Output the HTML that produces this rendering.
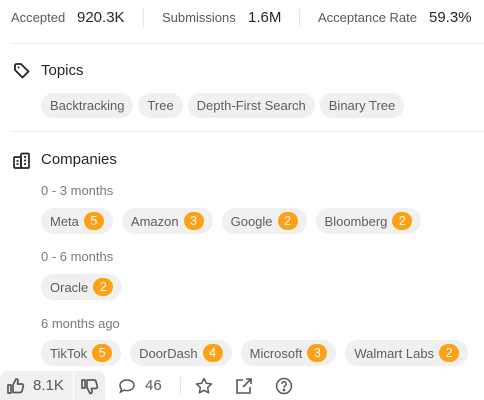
<!DOCTYPE html><html><head><style>
*{margin:0;padding:0;box-sizing:border-box}
body{width:484px;height:400px;background:#fff;font-family:"Liberation Sans",sans-serif;position:relative;overflow:hidden;color:#262626}
.a{position:absolute;white-space:nowrap}
.l{font-size:13px;color:#595959}
.v{font-size:15px;color:#262626}
.vd{position:absolute;width:1px;height:18px;background:#e5e5e5}
.hr{position:absolute;left:11px;right:0;height:1px;background:#ebebeb}
.h{font-size:15px;color:#262626}
.sub{font-size:13px;color:#7a7a7a}
.row{position:absolute;left:41px;display:flex;gap:7px}
.chip{height:26px;border-radius:13px;background:#f0f0f0;color:#5e5e5e;font-size:13px;padding:0 9px;display:flex;align-items:center;gap:4px}
.c .chip{padding:0 9px;gap:5px}
.b{background:#ffa116;color:#fff;border-radius:10px;min-width:20px;height:18px;font-size:12.5px;display:flex;align-items:center;justify-content:center}
svg{position:absolute}
</style></head><body>
<div class="a l" style="left:11px;top:10px">Accepted</div>
<div class="a v" style="left:77px;top:9px">920.3K</div>
<div class="vd" style="left:143px;top:9px"></div>
<div class="a l" style="left:162px;top:10px">Submissions</div>
<div class="a v" style="left:248px;top:9px">1.6M</div>
<div class="vd" style="left:299px;top:9px"></div>
<div class="a l" style="left:318px;top:10px">Acceptance Rate</div>
<div class="a v" style="left:429px;top:9px">59.3%</div>
<div class="hr" style="top:43px"></div>

<svg style="left:13px;top:62px" width="18" height="18" viewBox="0 0 18 18"><path d="M2 3v5l7.5 7.5 6-6L8 2H3z" fill="none" stroke="#262626" stroke-width="1.8" stroke-linejoin="round"/><circle cx="5.5" cy="5.5" r="1" fill="#262626"/></svg>
<div class="a h" style="left:41px;top:62px">Topics</div>
<div class="row" style="top:93px;gap:5px"><div class="chip" style="height:25px">Backtracking</div><div class="chip" style="height:25px">Tree</div><div class="chip" style="height:25px">Depth-First Search</div><div class="chip" style="height:25px">Binary Tree</div></div>
<div class="hr" style="top:131px"></div>

<svg style="left:13px;top:152px" width="18" height="18" viewBox="0 0 18 18"><rect x="1" y="5" width="7" height="11" rx="1" fill="none" stroke="#262626" stroke-width="1.7"/><rect x="8" y="1.5" width="8" height="14.5" rx="1" fill="none" stroke="#262626" stroke-width="1.7"/><path d="M3.5 9h2M3.5 12h2M11 5h2M11 8.5h2M11 12h2" stroke="#262626" stroke-width="1.7"/></svg>
<div class="a h" style="left:41px;top:151px">Companies</div>
<div class="a sub" style="left:41px;top:183px">0 - 3 months</div>
<div class="row c" style="top:208px;gap:9px"><div class="chip">Meta<span class="b">5</span></div><div class="chip">Amazon<span class="b">3</span></div><div class="chip">Google<span class="b">2</span></div><div class="chip">Bloomberg<span class="b">2</span></div></div>
<div class="a sub" style="left:41px;top:249px">0 - 6 months</div>
<div class="row c" style="top:274px"><div class="chip">Oracle<span class="b">2</span></div></div>
<div class="a sub" style="left:41px;top:316px">6 months ago</div>
<div class="row c" style="top:340px;gap:9px"><div class="chip">TikTok<span class="b">5</span></div><div class="chip">DoorDash<span class="b">4</span></div><div class="chip">Microsoft<span class="b">3</span></div><div class="chip">Walmart Labs<span class="b">2</span></div></div>

<div class="a" style="left:0;top:371px;width:73px;height:29px;background:#f0f0f0;border-top-left-radius:8px"></div>
<div class="a" style="left:74px;top:371px;width:31px;height:29px;background:#f0f0f0;border-top-right-radius:8px"></div>
<svg style="left:7px;top:377px" width="18" height="18" viewBox="0 0 18 18" fill="none" stroke="#595959" stroke-width="1.7" stroke-linejoin="round"><path d="M1 8h3v8H1zM6 8l3-6c1.5 0 2 1 2 2l-.5 3H15c1 0 1.5 1 1.3 2l-1.3 5c-.3 1-1 1.5-2 1.5H6z"/></svg>
<div class="a" style="left:33px;top:377px;font-size:15px;color:#595959">8.1K</div>
<svg style="left:81px;top:378px" width="18" height="18" viewBox="0 0 18 18" fill="none" stroke="#595959" stroke-width="1.7" stroke-linejoin="round"><path d="M1 2h3v8H1zM6 2h7c1 0 1.7.5 2 1.5l1.3 5c.2 1-.3 2-1.3 2h-4.5l.5 3c0 1-.5 2-2 2l-3-6z"/></svg>
<svg style="left:118px;top:378px" width="18" height="16" viewBox="0 0 18 16" fill="none" stroke="#595959" stroke-width="1.5"><path d="M9 2c4 0 7 2.3 7 5.3S13 12.6 9 12.6c-1 0-2-.1-3-.5L2.5 14l1-3C2.4 10 2 8.7 2 7.3 2 4.3 5 2 9 2z"/></svg>
<div class="a" style="left:145px;top:377px;font-size:15px;color:#595959">46</div>
<div class="vd" style="left:180px;top:377px"></div>
<svg style="left:195px;top:377px" width="18" height="18" viewBox="0 0 18 18" fill="none" stroke="#595959" stroke-width="1.5" stroke-linejoin="round"><path d="M9 1.5l2.3 4.8 5.2.7-3.8 3.6.9 5.2L9 13.3l-4.6 2.5.9-5.2L1.5 7l5.2-.7z"/></svg>
<svg style="left:235px;top:377px" width="18" height="18" viewBox="0 0 18 18" fill="none" stroke="#595959" stroke-width="1.6"><path d="M8 3H2v13h13v-6M11 2h5v5M16 2L8 10"/></svg>
<svg style="left:275px;top:377px" width="18" height="18" viewBox="0 0 18 18" fill="none" stroke="#595959" stroke-width="1.5"><circle cx="9" cy="9" r="7.5"/><path d="M6.8 7a2.2 2.2 0 1 1 3 2c-.6.3-.8.7-.8 1.3v.5"/><circle cx="9" cy="13" r=".6" fill="#595959"/></svg>
</body></html>
